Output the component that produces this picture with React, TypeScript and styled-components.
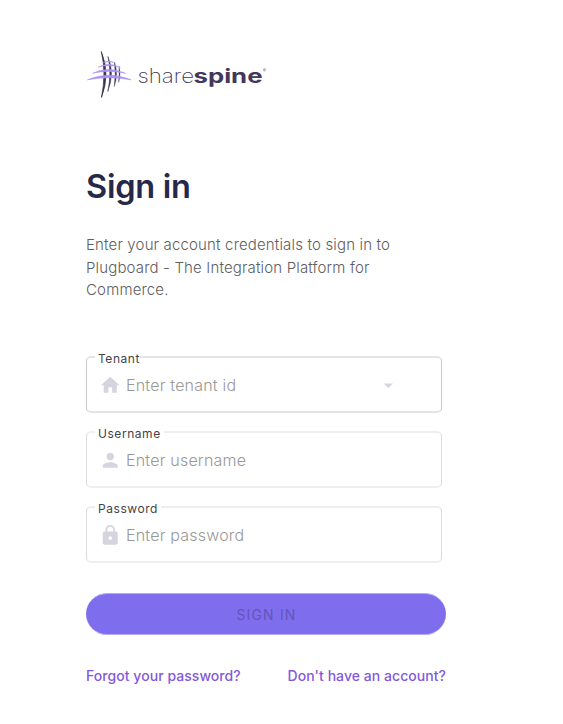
import React from "react";
import styled, { createGlobalStyle } from "styled-components";

const GlobalStyle = createGlobalStyle`
  * { box-sizing: border-box; }
  body { margin: 0; background: #fff; font-family: Inter, sans-serif; }
`;

const Page = styled.main`
  width: 360px;
  margin-left: 86px;
  padding-top: 48px;
`;

const Logo = styled.svg`
  display: block;
  width: 184px;
  height: 54px;
`;

const Title = styled.h1`
  margin: 65px 0 0;
  height: 40px;
  font-size: 32.5px;
  line-height: 40px;
  font-weight: 600;
  letter-spacing: -0.25px;
  color: #252849;
`;

const Intro = styled.p`
  width: 330px;
  margin: 27px 0 0;
  font-size: 15px;
  line-height: 22.5px;
  font-weight: 350;
  letter-spacing: 0.16px;
  color: #5e5e5e;
`;

const Form = styled.form`
  margin: 54.500px 0 0;
  display: flex;
  flex-direction: column;
  gap: 18px;
`;

const Field = styled.div<{ $strong?: boolean }>`
  position: relative;
  display: flex;
  align-items: center;
  width: 356px;
  height: 57px;
  padding: 1px 43px 0 13px;
  border: solid ${(p) => (p.$strong ? "#c9c9cb" : "#dcdcde")};
  border-width: 2px 1px;
  border-top-color: ${(p) => (p.$strong ? "#e4e4e4" : "#eeeeee")};
  border-bottom-color: ${(p) => (p.$strong ? "#e4e4e4" : "#eeeeee")};
  border-radius: 5px;
`;

const Label = styled.label<{ $tight?: boolean }>`
  position: absolute;
  left: 8px;
  top: -7px;
  padding: 0 ${(p) => (p.$tight ? 0 : 3)}px 0 3px;
  background: #fff;
  font-size: 12px;
  line-height: 15px;
  letter-spacing: 0.55px;
  color: #444;
`;

const Icon = styled.svg`
  flex: none;
  width: 22.5px;
  height: 22.5px;
  margin-right: 4.5px;
  margin-left: -1px;
  fill: #d5d5e0;
`;

const Placeholder = styled.span`
  flex: 1;
  font-size: 16px;
  line-height: 22px;
  font-weight: 300;
  letter-spacing: 0.2px;
  color: #999;
`;

const Arrow = styled(Icon)`
  margin: 0 -1.5px 0 0;
`;

const Submit = styled.button`
  width: 360px;
  height: 42px;
  margin-top: 12px;
  padding: 2px 0 0 1px;
  border: solid #b5abf5;
  border-width: 1px 0;
  border-radius: 21px;
  background: #7e6eed;
  font: 400 14px/20px Inter, sans-serif;
  letter-spacing: 1.15px;
  color: #6455b8;
`;

const Links = styled.nav`
  display: flex;
  justify-content: space-between;
  margin-top: 31px;
`;

const Link = styled.a`
  font-size: 14px;
  line-height: 20px;
  font-weight: 500;
  letter-spacing: 0.05px;
  white-space: nowrap;
  color: #8459dc;
`;

const fields = [
  { label: "Tenant", hint: "Enter tenant id", icon: "M10 20v-6h4v6h5v-8h3L12 3 2 12h3v8z", select: true },
  {
    label: "Username",
    hint: "Enter username",
    icon: "M12 12c2.21 0 4-1.79 4-4s-1.79-4-4-4-4 1.79-4 4 1.79 4 4 4zm0 2c-2.67 0-8 1.34-8 4v2h16v-2c0-2.66-5.33-4-8-4z",
  },
  {
    label: "Password",
    hint: "Enter password",
    icon: "M18 8h-1V6c0-2.76-2.24-5-5-5S7 3.24 7 6v2H6c-1.1 0-2 .9-2 2v10c0 1.1.9 2 2 2h12c1.1 0 2-.9 2-2V10c0-1.1-.9-2-2-2zm-6 9c-1.1 0-2-.9-2-2s.9-2 2-2 2 .9 2 2-.9 2-2 2zm3.100-9H8.900V6c0-1.710 1.390-3.100 3.100-3.100 1.710 0 3.100 1.390 3.100 3.100v2z",
  },
];

function BrandLogo() {
  return (
    <Logo viewBox="0 0 184 54" role="img" aria-label="sharespine">
      <g fill="#39304f">
        <path d="M15.300 3.500Q24.500 26 15.500 49.500Q20.500 25 15.300 3.500Z" stroke="#39304f" strokeWidth=".7" />
        <path d="M21.900 8.500Q29 25 21.800 43.500Q25.800 25 21.900 8.500Z" stroke="#39304f" strokeWidth=".5" />
        <path d="M28.500 14Q32.600 26 28.300 38.500Q30 26 28.500 14Z" stroke="#39304f" strokeWidth=".4" />
        <path d="M33 18.500Q35.200 26 32.700 34.500Q33.300 26 33 18.500Z" stroke="#39304f" strokeWidth=".3" />
      </g>
      <g fill="#a892f5">
        <path d="M1.500 31.800Q23 22.500 45 31.800Q23 27.500 1.500 31.800Z" stroke="#a892f5" strokeWidth=".6" />
        <path d="M6.500 25.300Q22 17.500 39.500 25.300Q22 21.500 6.500 25.300Z" stroke="#a892f5" strokeWidth=".5" />
        <path d="M12 19.300Q22 13.400 34.500 19.300Q22 16.400 12 19.300Z" stroke="#a892f5" strokeWidth=".4" />
        <path d="M17 14.600Q22 11.300 29 14.600Q22 13.300 17 14.600Z" stroke="#a892f5" strokeWidth=".3" />
      </g>
      <g fill="#43375b" fontFamily="Inter, sans-serif" fontSize="19.500">
        <text x="51.500" y="35.300" fontWeight="250" textLength="56.500" lengthAdjust="spacingAndGlyphs">share</text>
        <text x="107.500" y="35.300" fontWeight="750" textLength="69" lengthAdjust="spacingAndGlyphs">spine</text>
      </g>
      <circle cx="178.500" cy="21.800" r="1.200" fill="#b9b4c4" stroke="#43375b" strokeWidth=".4" opacity=".7" />
    </Logo>
  );
}

export default function App() {
  return (
    <>
      <GlobalStyle />
      <Page>
        <BrandLogo />
        <Title>Sign in</Title>
        <Intro>Enter your account credentials to sign in to Plugboard - The Integration Platform for Commerce.</Intro>
        <Form>
          {fields.map((f) => (
            <Field key={f.label} $strong={f.select}>
              <Label $tight={f.select}>{f.label}</Label>
              <Icon viewBox="0 0 24 24"><path d={f.icon} /></Icon>
              <Placeholder>{f.hint}</Placeholder>
              {f.select && <Arrow viewBox="0 0 24 24"><path d="M7 10l5 5 5-5z" /></Arrow>}
            </Field>
          ))}
          <Submit type="button">SIGN IN</Submit>
        </Form>
        <Links>
          <Link>Forgot your password?</Link>
          <Link>Don't have an account?</Link>
        </Links>
      </Page>
    </>
  );
}
